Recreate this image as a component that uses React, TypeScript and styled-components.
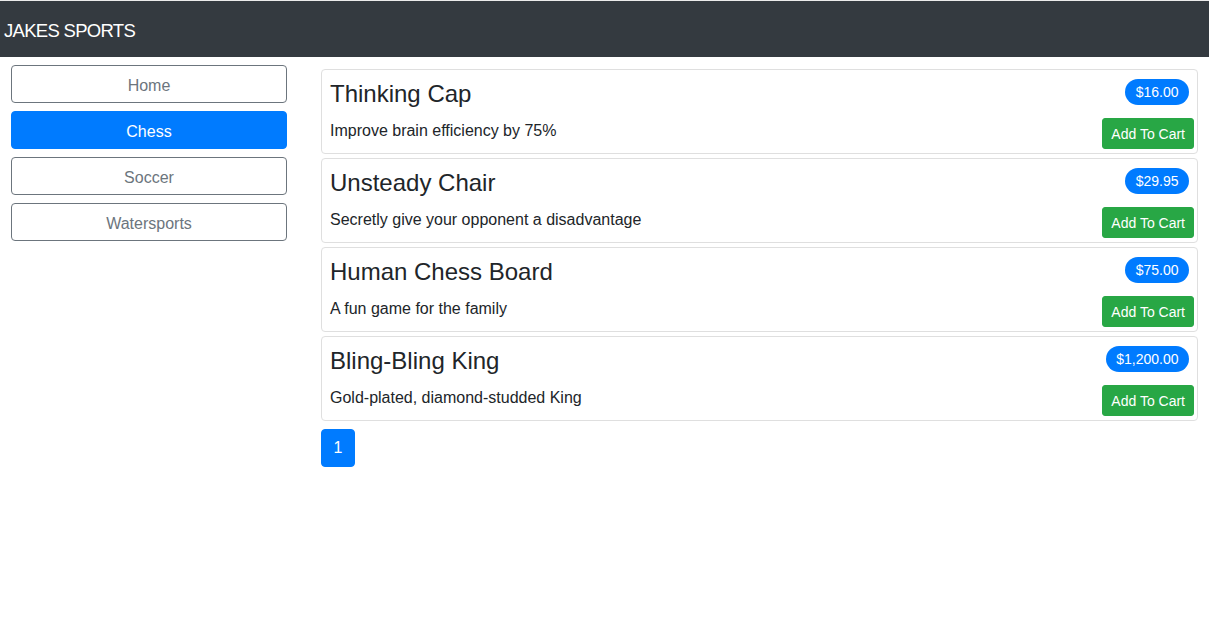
import React from "react";
import styled, { createGlobalStyle } from "styled-components";

const GlobalStyle = createGlobalStyle`
  html, body { margin: 0; padding: 0; background: #fff; }
  body {
    font-family: "Segoe UI", "Liberation Sans", Arial, sans-serif;
    font-size: 16px;
    line-height: 1.5;
    color: #212529;
    border-top: 1px solid #ebebeb;
  }
  * { box-sizing: border-box; }
`;

const NavBar = styled.header`
  height: 56px;
  background: #343a40;
  display: flex;
  align-items: center;
  padding: 3px 4px 0;
`;

const Brand = styled.span`
  color: #fff;
  font-size: 18.5px;
  letter-spacing: -0.7px;
  line-height: 30px;
  white-space: nowrap;
`;

const Main = styled.main`
  display: grid;
  grid-template-columns: 276px 1fr;
  column-gap: 34px;
  padding: 0 11px;
`;

const Side = styled.nav`
  display: flex;
  flex-direction: column;
  gap: 8px;
  padding-top: 8px;
`;

const CategoryButton = styled.button<{ $active?: boolean }>`
  height: 38px;
  width: 100%;
  border-radius: 4px;
  border: 1px solid ${(p) => (p.$active ? "#007bff" : "#6c757d")};
  background: ${(p) => (p.$active ? "#007bff" : "#fff")};
  color: ${(p) => (p.$active ? "#fff" : "#6c757d")};
  font-family: inherit;
  font-size: 16px;
  line-height: 24px;
  padding: 8px 12px 4px;
  cursor: pointer;
`;

const Content = styled.section`
  display: flex;
  flex-direction: column;
  gap: 4px;
  padding-top: 12px;
`;

const Card = styled.article`
  border: 1px solid #dfdfdf;
  border-radius: 4px;
  padding: 7px 3px 4px 8px;
  display: flex;
  flex-direction: column;
  gap: 11px;
`;

const TitleRow = styled.div`
  display: flex;
  align-items: center;
  justify-content: space-between;
  height: 29px;
`;

const Title = styled.h4`
  margin: 4px 0 0;
  font-size: 24px;
  line-height: 29px;
  font-weight: 500;
  color: #212529;
`;

const PriceBadge = styled.span`
  display: inline-flex;
  align-items: center;
  height: 26px;
  padding: 1px 10.5px 0;
  border-radius: 13px;
  background: #007bff;
  color: #fff;
  font-size: 14px;
  margin-right: 5px;
`;

const BodyRow = styled.div`
  display: flex;
  align-items: flex-start;
  justify-content: space-between;
  height: 32px;
`;

const Description = styled.p`
  margin: 2px 0 0;
  font-size: 16px;
  line-height: 24px;
`;

const CartButton = styled.button`
  margin-top: 1px;
  height: 31px;
  padding: 5px 8px 3px;
  border: 1px solid #28a745;
  border-radius: 3px;
  background: #28a745;
  color: #fff;
  font-family: inherit;
  font-size: 14px;
  line-height: 21px;
  cursor: pointer;
`;

const Pager = styled.div`
  display: flex;
  gap: 4px;
  padding-top: 4px;
`;

const PageButton = styled.button<{ $active?: boolean }>`
  width: 34px;
  height: 38px;
  border-radius: 4px;
  border: 1px solid #007bff;
  background: ${(p) => (p.$active ? "#007bff" : "#fff")};
  color: ${(p) => (p.$active ? "#fff" : "#007bff")};
  font-family: inherit;
  font-size: 16px;
  padding: 0;
`;

const categories = ["Home", "Chess", "Soccer", "Watersports"];

const products = [
  { name: "Thinking Cap", desc: "Improve brain efficiency by 75%", price: "$16.00" },
  { name: "Unsteady Chair", desc: "Secretly give your opponent a disadvantage", price: "$29.95" },
  { name: "Human Chess Board", desc: "A fun game for the family", price: "$75.00" },
  { name: "Bling-Bling King", desc: "Gold-plated, diamond-studded King", price: "$1,200.00" },
];

export default function App() {
  return (
    <>
      <GlobalStyle />
      <NavBar>
        <Brand>JAKES SPORTS</Brand>
      </NavBar>
      <Main>
        <Side>
          {categories.map((c) => (
            <CategoryButton key={c} $active={c === "Chess"}>
              {c}
            </CategoryButton>
          ))}
        </Side>
        <Content>
          {products.map((p) => (
            <Card key={p.name}>
              <TitleRow>
                <Title>{p.name}</Title>
                <PriceBadge>{p.price}</PriceBadge>
              </TitleRow>
              <BodyRow>
                <Description>{p.desc}</Description>
                <CartButton>Add To Cart</CartButton>
              </BodyRow>
            </Card>
          ))}
          <Pager>
            <PageButton $active>1</PageButton>
          </Pager>
        </Content>
      </Main>
    </>
  );
}
